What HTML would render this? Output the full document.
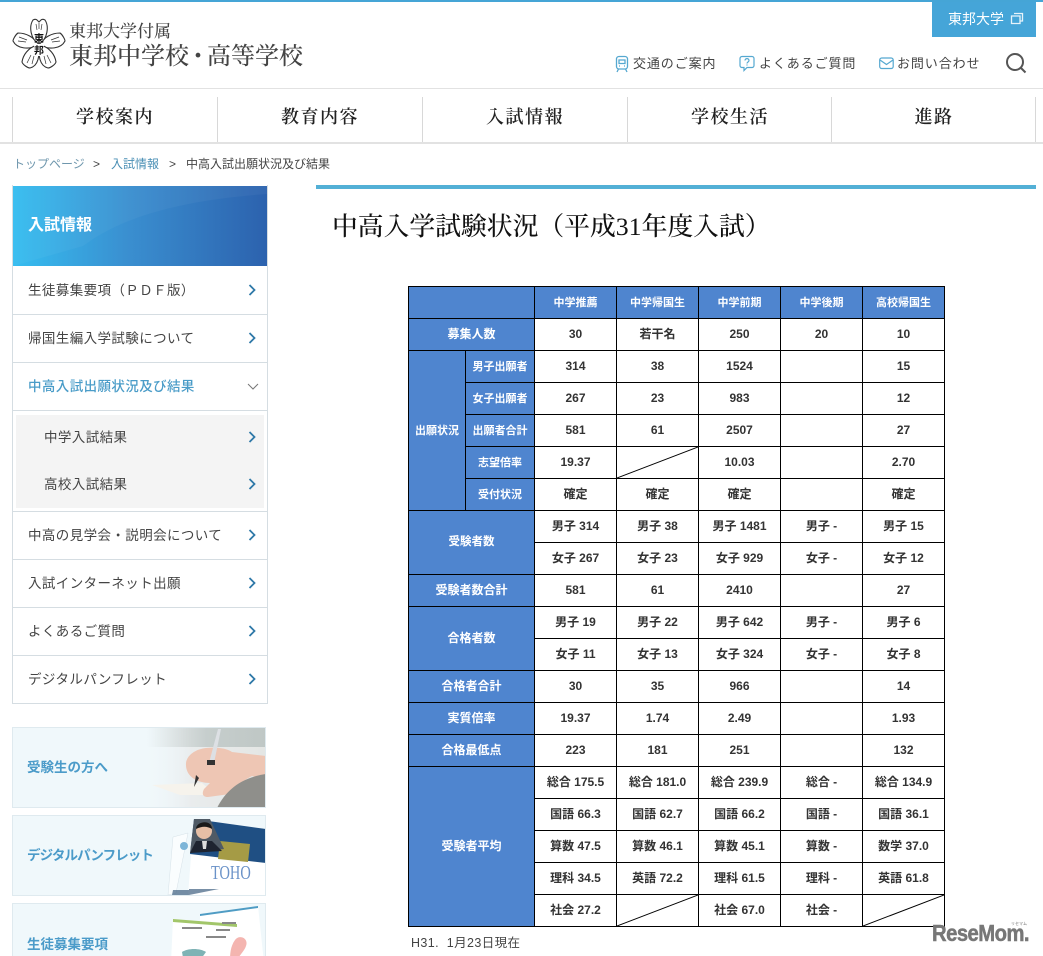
<!DOCTYPE html>
<html lang="ja"><head><meta charset="utf-8"><title>中高入学試験状況</title>
<style>
*{box-sizing:border-box}
html,body{margin:0;padding:0;width:1043px;height:956px;overflow:hidden;background:#fff}
body{position:relative;font-family:"Liberation Sans","Noto Sans CJK JP",sans-serif;color:#333}
.a{position:absolute;white-space:nowrap}
.sf{font-family:"Liberation Serif","Noto Serif CJK SC",serif}
.nav{position:absolute;top:97px;height:45px;width:205px;border-left:1px solid #d8d8d8;text-align:center;font:600 18px/40px "Liberation Serif","Noto Serif CJK SC",serif;letter-spacing:1.5px;color:#222}
.side{position:absolute;left:12px;width:256px;height:48px;border-bottom:1px solid #d5dde2;font-size:13.5px;line-height:47px;padding-left:16px;letter-spacing:.4px;color:#444;font-weight:400}
.chev{position:absolute;left:248px;width:8px;height:12px}
table{position:absolute;left:408px;top:286px;border-collapse:collapse;table-layout:fixed;width:536px;font-size:12px;font-weight:700;color:#333}
td{border:1px solid #000;height:32px;padding:0 0 2px;text-align:center;vertical-align:middle;line-height:14px;position:relative}
td.h{background:#4f85cf;color:#fff;font-size:11px;font-weight:700;padding-bottom:0}
td.b{background:#4f85cf;color:#fff;font-weight:700}
td.d{background:none;padding:0}
td.d svg{position:absolute;left:0;top:0;width:100%;height:100%}
</style></head><body>
<div class="a" style="left:0;top:0;width:1043px;height:2px;background:#45a5d6"></div>

<svg class="a" style="left:12px;top:18px" width="54" height="52" viewBox="0 0 54 52" fill="#fff" stroke="#333" stroke-width="1.100">
<path d="M27 27C22 19 14 15 6 15c-3 2-5 7-5 8 4 8 16 9 26 4z"/>
<path d="M27 27c5-8 13-12 21-12 3 2 5 7 5 8-4 8-16 9-26 4z"/>
<path d="M25 27c-9 3-14 10-15 17 1 3 6 6 8 6 8-2 11-13 7-23z"/>
<path d="M29 27c9 3 14 10 15 17-1 3-6 6-8 6-8-2-11-13-7-23z"/>
<path d="M27 26C18 21 17 8 21 2c2-1 3-1 4 0l2 2 2-2c1-1 2-1 4 0 4 6 3 19-6 24z"/>
<path d="M24 6l1 6M27 5v6M30 6l-1 6M7 19l8 3M6 23l8 1M47 19l-8 3M48 23l-8 1M15 45l4-8M20 46l2-8M39 45l-4-8M34 46l-2-8" stroke-width=".7"/>
<rect x="22" y="26" width="10" height="12" stroke="none"/>
<text x="27" y="24" text-anchor="middle" font-size="10" font-weight="700" fill="#111" stroke="none" font-family="Liberation Sans,Noto Sans CJK JP,sans-serif">東</text>
<text x="27" y="36" text-anchor="middle" font-size="10" font-weight="700" fill="#111" stroke="none" font-family="Liberation Sans,Noto Sans CJK JP,sans-serif">邦</text>
</svg>
<div class="a sf" style="left:69px;top:22px;font-size:17px;line-height:20px;color:#444;font-weight:500">東邦大学付属</div>
<div class="a sf" style="left:69px;top:42px;font-size:24px;line-height:30px;color:#444;font-weight:500">東邦中学校<span style="margin:0 -3px">・</span>高等学校</div>

<div class="a" style="left:932px;top:2px;width:104px;height:35px;background:#45a5d8"></div>
<div class="a" style="left:948px;top:9px;font-size:14px;line-height:20px;color:#fff">東邦大学</div>
<svg class="a" style="left:1010px;top:12px" width="14" height="13" fill="none" stroke="#e6f3fa" stroke-width="1.300"><path d="M4 1.500h8.500v7.500h-2M1.500 4h8.500v7.500h-8.500z"/></svg>

<svg class="a" style="left:615px;top:55px" width="14" height="18" viewBox="0 0 14 18" fill="none" stroke="#55a8d0" stroke-width="1.300"><rect x="1.500" y="1.500" width="11" height="12.500" rx="2.500"/><path d="M4 5h6v3.500h-6zM4 11h1M9 11h1M3.500 14l-1.500 3M10.500 14l1.500 3"/></svg>
<div class="a" style="left:633px;top:55px;font-size:13px;line-height:18px;letter-spacing:.9px;font-weight:400;color:#444">交通のご案内</div>
<svg class="a" style="left:739px;top:55px" width="16" height="17" viewBox="0 0 16 17" fill="none" stroke="#55a8d0" stroke-width="1.200"><path d="M3 1.500h10a2 2 0 0 1 2 2v7a2 2 0 0 1-2 2h-5l-3 3v-3h-2a2 2 0 0 1-2-2v-7a2 2 0 0 1 2-2z"/><path d="M6 5.500c0-2.500 4-2.500 4 0 0 1.500-2 1.500-2 3M8 9.500v1"/></svg>
<div class="a" style="left:759px;top:55px;font-size:13px;line-height:18px;letter-spacing:.9px;font-weight:400;color:#444">よくあるご質問</div>
<svg class="a" style="left:879px;top:57px" width="15" height="13" viewBox="0 0 15 13" fill="none" stroke="#55a8d0" stroke-width="1.200"><rect x=".7" y="1" width="13.500" height="10.500" rx="2"/><path d="M1 3l6.500 4.500 6.500-4.500"/></svg>
<div class="a" style="left:897px;top:55px;font-size:13px;line-height:18px;letter-spacing:.9px;font-weight:400;color:#444">お問い合わせ</div>
<svg class="a" style="left:1005px;top:52px" width="22" height="22" fill="none" stroke="#555" stroke-width="2"><circle cx="10" cy="10" r="8"/><path d="M15.500 15.500l5 5"/></svg>

<div class="a" style="left:0;top:88px;width:1043px;height:1px;background:#e2e2e2"></div>
<div class="nav" style="left:12px">学校案内</div>
<div class="nav" style="left:217px">教育内容</div>
<div class="nav" style="left:422px">入試情報</div>
<div class="nav" style="left:627px">学校生活</div>
<div class="nav" style="left:831px">進路</div>
<div class="a" style="left:1035px;top:97px;width:1px;height:45px;background:#d8d8d8"></div>
<div class="a" style="left:0;top:142px;width:1043px;height:2px;background:#e2e2e2"></div>

<div class="a" style="left:13px;top:155px;font-size:12px;line-height:18px;color:#6f97ad">トップページ</div>
<div class="a" style="left:93px;top:155px;font-size:12px;line-height:18px;color:#444">&gt;</div>
<div class="a" style="left:111px;top:155px;font-size:12px;line-height:18px;color:#4a8fb5">入試情報</div>
<div class="a" style="left:169px;top:155px;font-size:12px;line-height:18px;color:#444">&gt;</div>
<div class="a" style="left:186px;top:155px;font-size:12px;line-height:18px;color:#444">中高入試出願状況及び結果</div>

<div class="a" style="left:12px;top:185px;width:256px;height:519px;border:1px solid #d5dde2;border-top:0"></div>
<div class="a" style="left:13px;top:186px;width:254px;height:80px;overflow:hidden;background:linear-gradient(90deg,#35bdf0 0%,#3a8fd0 45%,#2c62ae 100%)">
<svg width="254" height="80" style="position:absolute;left:0;top:0"><path d="M0 0h254v8C170 14 110 30 70 60L0 80z" fill="#fff" opacity=".04"/></svg></div>
<div class="a" style="left:28px;top:216px;font-size:16px;line-height:20px;font-weight:700;color:#fff">入試情報</div>

<div class="side" style="top:267px">生徒募集要項（ＰＤＦ版）</div>
<div class="side" style="top:315px">帰国生編入学試験について</div>
<div class="side" style="top:363px;color:#4a9cc8;font-weight:500;">中高入試出願状況及び結果</div>
<div class="a" style="left:16px;top:415px;width:248px;height:93px;background:#f4f4f4"></div>
<div class="a" style="left:44px;top:428px;font-size:13.500px;line-height:20px;letter-spacing:.4px;color:#444">中学入試結果</div>
<div class="a" style="left:44px;top:475px;font-size:13.500px;line-height:20px;letter-spacing:.4px;color:#444">高校入試結果</div>
<div class="a" style="left:13px;top:511px;width:254px;height:1px;background:#d5dde2"></div>
<div class="side" style="top:512px">中高の見学会・説明会について</div>
<div class="side" style="top:560px">入試インターネット出願</div>
<div class="side" style="top:608px">よくあるご質問</div>
<div class="side" style="top:656px;border-bottom:0">デジタルパンフレット</div>

<svg class="chev" style="top:284px"><path d="M1.500 1l5 5-5 5" fill="none" stroke="#2f79a8" stroke-width="1.800"/></svg>
<svg class="chev" style="top:332px"><path d="M1.500 1l5 5-5 5" fill="none" stroke="#2f79a8" stroke-width="1.800"/></svg>
<svg class="a" style="left:247px;top:383px" width="12" height="8"><path d="M1 1l5 5 5-5" fill="none" stroke="#777" stroke-width="1"/></svg>
<svg class="chev" style="top:431px"><path d="M1.500 1l5 5-5 5" fill="none" stroke="#2f79a8" stroke-width="1.800"/></svg>
<svg class="chev" style="top:478px"><path d="M1.500 1l5 5-5 5" fill="none" stroke="#2f79a8" stroke-width="1.800"/></svg>
<svg class="chev" style="top:529px"><path d="M1.500 1l5 5-5 5" fill="none" stroke="#2f79a8" stroke-width="1.800"/></svg>
<svg class="chev" style="top:577px"><path d="M1.500 1l5 5-5 5" fill="none" stroke="#2f79a8" stroke-width="1.800"/></svg>
<svg class="chev" style="top:625px"><path d="M1.500 1l5 5-5 5" fill="none" stroke="#2f79a8" stroke-width="1.800"/></svg>
<svg class="chev" style="top:673px"><path d="M1.500 1l5 5-5 5" fill="none" stroke="#2f79a8" stroke-width="1.800"/></svg>

<!-- banners -->
<div class="a" style="left:12px;top:727px;width:254px;height:81px;background:#f0f8fb;border:1px solid #dfeaef;overflow:hidden">
<svg width="254" height="81" style="position:absolute;left:-1px;top:-1px">
<defs><linearGradient id="g1" x1="0" x2="1" y1="0" y2="0"><stop offset="0" stop-color="#f0f8fb" stop-opacity="0"/><stop offset=".4" stop-color="#e9eced"/><stop offset="1" stop-color="#e4e6e4"/></linearGradient>
<linearGradient id="g2" x1="0" x2="1" y1="0" y2="0"><stop offset="0" stop-color="#cfd6d5" stop-opacity="0"/><stop offset=".5" stop-color="#c6cecd"/><stop offset="1" stop-color="#bfc7c5"/></linearGradient></defs>
<rect x="130" y="0" width="124" height="81" fill="url(#g1)"/>
<rect x="135" y="0" width="119" height="20" fill="url(#g2)"/>
<path d="M140 58l50-2 14 12h-36z" fill="#f6f3ec"/>
<path d="M174 36c1-8 10-14 20-15 10-1 20 0 26 4l34 4v24l-14-4c-8 4-16 10-22 18l-22 3c-6 0-6-4-4-8l6-6c-12 0-25-6-24-20z" fill="#eec6b4"/>
<path d="M184 48l-2 12 5-9z" fill="#333"/><path d="M197 36l9-34h3l-7 34z" fill="#dde0e4"/><path d="M195 33h8v5h-8z" fill="#333"/>
<path d="M205 81c8-16 22-30 49-34v34z" fill="#8f8f8b"/>
</svg></div>
<div class="a" style="left:27px;top:758px;font-size:13.500px;line-height:20px;font-weight:700;color:#4b9bc9">受験生の方へ</div>

<div class="a" style="left:12px;top:815px;width:254px;height:81px;background:#f0f8fb;border:1px solid #dfeaef;overflow:hidden">
<svg width="254" height="81" style="position:absolute;left:-1px;top:-1px">
<path d="M161 22l15-4-12 60-8 2z" fill="#fafdfe" stroke="#d6e2e8" stroke-width=".5"/><circle cx="172" cy="31" r="4" fill="#7db5d8"/>
<path d="M182 4l72 10v66h-78z" fill="#fff"/>
<path d="M182 4l72 10v34l-76-9z" fill="#1f4f83"/>
<path d="M208 26l30 3-2 18-30-3z" fill="#a59b45"/>
<path d="M182 4h16l14 30-34 4z" fill="#4f5a65"/>
<circle cx="192" cy="16" r="8" fill="#e6bfa6"/><path d="M184 14c0-8 16-10 16 0-5-3-10-3-16 0z" fill="#1a1a1a"/>
<path d="M178 38l6-12h16l10 10z" fill="#1e2430"/><path d="M190 26h5l-1 8h-3z" fill="#ddd"/>
<path d="M177 74h30l-30 6zM161 75h17l-1 5h-17z" fill="#3f5f80" opacity=".7"/>
</svg>
<span class="sf" style="position:absolute;left:198px;top:47px;font-size:20px;line-height:20px;color:#6a92c8;transform-origin:left;transform:scaleX(.72);display:block">TOHO</span>
</div>
<div class="a" style="left:27px;top:846px;font-size:13.500px;line-height:20px;font-weight:700;color:#4b9bc9;letter-spacing:-.9px">デジタルパンフレット</div>

<div class="a" style="left:12px;top:903px;width:254px;height:60px;background:#f0f8fb;border:1px solid #dfeaef;overflow:hidden">
<svg width="254" height="60" style="position:absolute;left:-1px;top:-1px">
<path d="M188 11l58-8 6 57h-64z" fill="#fff"/><path d="M188 11l58-8v2l-58 8z" fill="#4f9cc4"/>
<path d="M161 16l64 5-1 39h-65z" fill="#fff"/><path d="M161 16l64 5v3l-64-5z" fill="#a2c66a"/>
<path d="M223 37c4-6 14-2 11 6-2 6-8 10-10 17h-6c0-8 0-16 5-23z" fill="#f4b5b0"/>
<path d="M170 49c6-4 18-4 24 0l-8 11h-14z" fill="#7fb3b5"/>
<path d="M170 25h20M194 34h20M204 27h14M210 20h14" stroke="#888" stroke-width="2"/>
</svg></div>
<div class="a" style="left:27px;top:935px;font-size:13.500px;line-height:20px;font-weight:700;color:#4b9bc9">生徒募集要項</div>

<!-- main -->
<div class="a" style="left:316px;top:185px;width:720px;height:4px;background:#53b0d6"></div>
<div class="a sf" style="left:332px;top:209px;font-size:25.800px;line-height:36px;color:#111;font-weight:500">中高入学試験状況（平成31年度入試）</div>

<table>
<colgroup><col style="width:57px"><col style="width:69px"><col style="width:82px"><col style="width:82px"><col style="width:82px"><col style="width:82px"><col style="width:82px"></colgroup>
<tr><td class="h" colspan="2"></td><td class="h">中学推薦</td><td class="h">中学帰国生</td><td class="h">中学前期</td><td class="h">中学後期</td><td class="h">高校帰国生</td></tr>
<tr><td class="b" colspan="2">募集人数</td><td>30</td><td>若干名</td><td>250</td><td>20</td><td>10</td></tr>
<tr><td class="h" rowspan="5">出願状況</td><td class="h">男子出願者</td><td>314</td><td>38</td><td>1524</td><td></td><td>15</td></tr>
<tr><td class="h">女子出願者</td><td>267</td><td>23</td><td>983</td><td></td><td>12</td></tr>
<tr><td class="h">出願者合計</td><td>581</td><td>61</td><td>2507</td><td></td><td>27</td></tr>
<tr><td class="h">志望倍率</td><td>19.37</td><td class="d"><svg viewBox="0 0 82 32" preserveAspectRatio="none"><path d="M0 32L82 0" stroke="#000" stroke-width="1" fill="none"/></svg></td><td>10.03</td><td></td><td>2.70</td></tr>
<tr><td class="h">受付状況</td><td>確定</td><td>確定</td><td>確定</td><td></td><td>確定</td></tr>
<tr><td class="b" colspan="2" rowspan="2" style="font-size:11.500px">受験者数</td><td>男子 314</td><td>男子 38</td><td>男子 1481</td><td>男子 -</td><td>男子 15</td></tr>
<tr><td>女子 267</td><td>女子 23</td><td>女子 929</td><td>女子 -</td><td>女子 12</td></tr>
<tr><td class="b" colspan="2">受験者数合計</td><td>581</td><td>61</td><td>2410</td><td></td><td>27</td></tr>
<tr><td class="b" colspan="2" rowspan="2">合格者数</td><td>男子 19</td><td>男子 22</td><td>男子 642</td><td>男子 -</td><td>男子 6</td></tr>
<tr><td>女子 11</td><td>女子 13</td><td>女子 324</td><td>女子 -</td><td>女子 8</td></tr>
<tr><td class="b" colspan="2">合格者合計</td><td>30</td><td>35</td><td>966</td><td></td><td>14</td></tr>
<tr><td class="b" colspan="2">実質倍率</td><td>19.37</td><td>1.74</td><td>2.49</td><td></td><td>1.93</td></tr>
<tr><td class="b" colspan="2">合格最低点</td><td>223</td><td>181</td><td>251</td><td></td><td>132</td></tr>
<tr><td class="b" colspan="2" rowspan="5">受験者平均</td><td>総合 175.5</td><td>総合 181.0</td><td>総合 239.9</td><td>総合 -</td><td>総合 134.9</td></tr>
<tr><td>国語 66.3</td><td>国語 62.7</td><td>国語 66.2</td><td>国語 -</td><td>国語 36.1</td></tr>
<tr><td>算数 47.5</td><td>算数 46.1</td><td>算数 45.1</td><td>算数 -</td><td>数学 37.0</td></tr>
<tr><td>理科 34.5</td><td>英語 72.2</td><td>理科 61.5</td><td>理科 -</td><td>英語 61.8</td></tr>
<tr><td>社会 27.2</td><td class="d"><svg viewBox="0 0 82 32" preserveAspectRatio="none"><path d="M0 32L82 0" stroke="#000" stroke-width="1" fill="none"/></svg></td><td>社会 67.0</td><td>社会 -</td><td class="d"><svg viewBox="0 0 82 32" preserveAspectRatio="none"><path d="M0 32L82 0" stroke="#000" stroke-width="1" fill="none"/></svg></td></tr>
</table>

<div class="a" style="left:411px;top:934px;font-size:12.500px;line-height:18px;color:#444;letter-spacing:.4px">H31.&nbsp; 1月23日現在</div>

<div class="a" style="left:932px;top:918px;font-size:23px;line-height:30px;font-weight:700;color:#777;letter-spacing:-.6px;transform-origin:left;transform:scaleX(.88);-webkit-text-stroke:.5px #777">ReseMom.</div>
<div class="a" style="left:1011px;top:921px;font-size:4px;line-height:5px;color:#777">リセマム</div>
</body></html>
